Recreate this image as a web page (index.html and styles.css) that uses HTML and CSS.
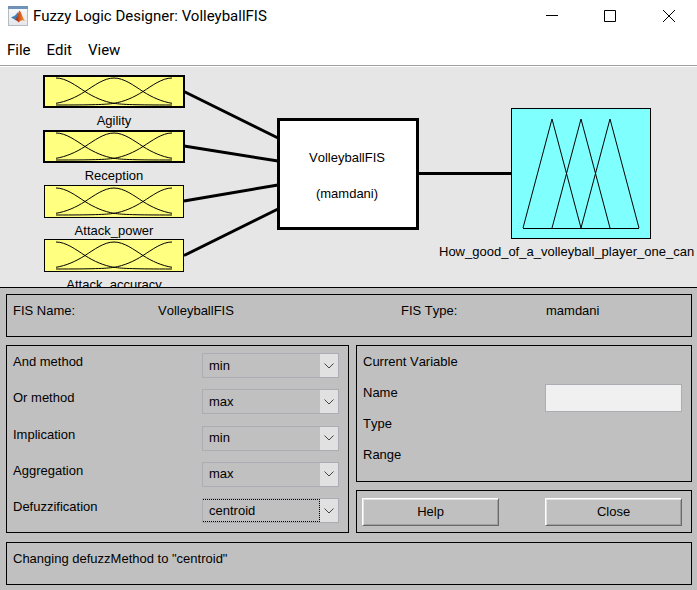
FILE: index.html
```html
<!DOCTYPE html>
<html lang="en">
<head>
<meta charset="utf-8">
<title>Fuzzy Logic Designer: VolleyballFIS</title>
<meta name="viewport" content="width=device-width, initial-scale=1">
<link rel="stylesheet" href="styles.css">
</head>
<body>
<header class="titlebar">
  <svg class="app-icon" viewBox="0 0 20 20" aria-hidden="true">
    <defs>
      <linearGradient id="frame" x1="0" y1="0" x2="0" y2="1">
        <stop offset="0" stop-color="#fafafa"/><stop offset="1" stop-color="#e4e6ea"/>
      </linearGradient>
      <linearGradient id="flame" x1="0" y1="0" x2="1" y2="0">
        <stop offset="0" stop-color="#7a1e10"/><stop offset=".45" stop-color="#d9531e"/><stop offset="1" stop-color="#f0a030"/>
      </linearGradient>
    </defs>
    <rect x=".5" y=".5" width="19" height="19" fill="url(#frame)" stroke="#b4bcc4"/>
    <rect x="0" y="0" width="20" height="3" fill="#6f93b6"/>
    <path d="M3 11.500 7 9.500 10.500 5.500 9.500 11 7.500 14z" fill="#3f7fb5"/>
    <path d="M7 14C9.500 12 10 7 11.500 4.500C13.500 6 14 11 17 15C14.500 13.500 13 14 10.500 16.500C9.500 15 8.500 14 7 14z" fill="url(#flame)"/>
  </svg>
  <h1 class="title">Fuzzy Logic Designer: VolleyballFIS</h1>
  <div class="window-buttons">
    <button type="button" class="window-button" aria-label="Minimize"><svg viewBox="0 0 14 14"><path d="M1 6.500H13"/></svg></button>
    <button type="button" class="window-button" aria-label="Maximize"><svg viewBox="0 0 14 14"><path d="M1.500 1.500H12.500V12.500H1.500z"/></svg></button>
    <button type="button" class="window-button" aria-label="Close window"><svg viewBox="0 0 14 14"><path d="M2 1 14 13M14 1 2 13"/></svg></button>
  </div>
</header>
<nav class="menubar">
  <button type="button" class="menu">File</button>
  <button type="button" class="menu">Edit</button>
  <button type="button" class="menu">View</button>
</nav>

<main>
  <svg class="diagram" viewBox="0 0 697 220" role="img" aria-label="Fuzzy inference system diagram">
    <defs>
      <g id="gaussians">
        <path d="M-58 0C-48 0-38 7.700-29 13.500C-20 19.300-10 23.700 0 25.300C8 26.600 22 27 58 27"/>
        <path d="M-58 25.300C-48 23.700-38 19.300-29 13.500C-20 7.700-10 0 0 0C10 0 20 7.700 29 13.500C38 19.300 48 23.700 58 25.300"/>
        <path d="M58 0C48 0 38 7.700 29 13.500C20 19.300 10 23.700 0 25.300C-8 26.600-22 27-58 27"/>
      </g>
    </defs>
    <g class="wires">
      <path d="M184 24.500 278 71M184 79 278 94M184 134 278 118M184 188.500 278 142M418 106.500H512"/>
    </g>
    <g class="input-box">
      <rect class="thick" x="44" y="9" width="140" height="31"/>
      <rect class="thick" x="44" y="64" width="140" height="31"/>
      <rect x="44.500" y="118.500" width="139" height="32"/>
      <rect x="44.500" y="172.500" width="139" height="32"/>
    </g>
    <g class="curves">
      <use href="#gaussians" x="114" y="11"/>
      <use href="#gaussians" x="114" y="66"/>
      <use href="#gaussians" x="114" y="121"/>
      <use href="#gaussians" x="114" y="175"/>
    </g>
    <rect class="system-box" x="278.500" y="52.500" width="139" height="109"/>
    <rect class="output-box" x="511.500" y="41.500" width="139" height="130"/>
    <path class="curves" d="M523 161.500H639M523 161 552 52 581 161M552 161 581 52 610 161M581 161 610 52 639 161"/>
    <g class="names">
      <text x="114" y="58">Agility</text>
      <text x="114" y="113">Reception</text>
      <text x="114" y="168">Attack_power</text>
      <text x="114" y="222">Attack_accuracy</text>
      <text x="347" y="95">VolleyballFIS</text>
      <text x="347" y="131">(mamdani)</text>
      <text class="from-left" x="439" y="189">How_good_of_a_volleyball_player_one_can</text>
    </g>
  </svg>

  <form class="controls">
    <dl class="panel summary">
      <dt>FIS Name:</dt><dd>VolleyballFIS</dd>
      <dt>FIS Type:</dt><dd>mamdani</dd>
    </dl>

    <section class="panel methods">
      <div class="method">
        <label for="and">And method</label>
        <div class="dropdown"><select id="and"><option>min</option></select><span class="arrow"><svg viewBox="0 0 10 6"><path d="M.5 .5 5 5 9.500 .5"/></svg></span></div>
      </div>
      <div class="method">
        <label for="or">Or method</label>
        <div class="dropdown"><select id="or"><option>max</option></select><span class="arrow"><svg viewBox="0 0 10 6"><path d="M.5 .5 5 5 9.500 .5"/></svg></span></div>
      </div>
      <div class="method">
        <label for="implication">Implication</label>
        <div class="dropdown"><select id="implication"><option>min</option></select><span class="arrow"><svg viewBox="0 0 10 6"><path d="M.5 .5 5 5 9.500 .5"/></svg></span></div>
      </div>
      <div class="method">
        <label for="aggregation">Aggregation</label>
        <div class="dropdown"><select id="aggregation"><option>max</option></select><span class="arrow"><svg viewBox="0 0 10 6"><path d="M.5 .5 5 5 9.500 .5"/></svg></span></div>
      </div>
      <div class="method">
        <label for="defuzz">Defuzzification</label>
        <div class="dropdown active"><select id="defuzz"><option>centroid</option></select><span class="arrow"><svg viewBox="0 0 10 6"><path d="M.5 .5 5 5 9.500 .5"/></svg></span></div>
      </div>
    </section>

    <div class="side">
      <section class="panel variable">
        <h2>Current Variable</h2>
        <div class="field"><label for="name">Name</label><input id="name" type="text"></div>
        <div class="field">Type</div>
        <div class="field">Range</div>
      </section>
      <div class="panel actions">
        <button type="button" class="push">Help</button>
        <button type="button" class="push">Close</button>
      </div>
    </div>

    <p class="panel status" role="status">Changing defuzzMethod to "centroid"</p>
  </form>
</main>
</body>
</html>
```
FILE: styles.css
```css
* {
  box-sizing: border-box;
}

body {
  margin: 0;
  min-height: 100vh;
  background: #c0c0c0;
  color: #000;
  font: 13px/18px "Liberation Sans", Arial, sans-serif;
  font-kerning: none;
}

h1,
h2,
p,
dl,
dd {
  margin: 0;
  font-size: inherit;
  font-weight: normal;
}

button,
input,
select {
  font: inherit;
  color: inherit;
  border-radius: 0;
}

/* Window chrome */

.titlebar {
  display: flex;
  align-items: center;
  height: 32px;
  padding-left: 8px;
  background: #fff;
}

.app-icon {
  width: 20px;
  height: 20px;
  margin-right: 5px;
}

.title,
.menu {
  font: 15px/20px Roboto, "Segoe UI", sans-serif;
}

.window-buttons {
  display: flex;
  margin-left: auto;
}

.window-button {
  display: flex;
  align-items: center;
  justify-content: center;
  width: 58px;
  height: 32px;
  padding: 0;
  border: 0;
  background: none;
}

.window-button svg {
  width: 14px;
  height: 14px;
  fill: none;
  stroke: #000;
}

.menubar {
  display: flex;
  gap: 16px;
  align-items: center;
  height: 34px;
  padding: 3px 7px 0;
  border-bottom: 1px solid #a0a0a0;
  background: #fff;
}

.menu {
  padding: 0;
  border: 0;
  background: none;
}

/* System diagram */

.diagram {
  display: block;
  width: 100%;
  height: 222px;
  border-top: 1px solid #fff;
  border-bottom: 1px solid #000;
  background: #e6e6e6;
}

.wires {
  fill: none;
  stroke: #000;
  stroke-width: 3;
}

.input-box {
  fill: #ffff80;
  stroke: #000;
}

.thick {
  stroke-width: 2;
}

.system-box {
  fill: #fff;
  stroke: #000;
  stroke-width: 3;
}

.output-box {
  fill: #80ffff;
  stroke: #000;
}

.curves {
  fill: none;
  stroke: #000;
}

.names {
  text-anchor: middle;
}

.from-left {
  text-anchor: start;
}

/* Control panels */

.controls {
  display: grid;
  grid-template-columns: 343fr 336fr;
  gap: 8px 7px;
  padding: 6px 5px 6px 6px;
}

.panel {
  border: 1px solid #000;
  padding: 7px 9px 6px 6px;
}

.summary,
.status {
  grid-column: 1 / -1;
  min-height: 43px;
}

.summary {
  display: grid;
  grid-template-columns: 145fr 243fr 145fr 136fr;
}

.status {
  margin-top: 1px;
}

.methods {
  display: flex;
  flex-direction: column;
  justify-content: space-between;
  padding-bottom: 9px;
}

.method,
.field {
  display: flex;
  justify-content: space-between;
  align-items: flex-start;
}

.dropdown {
  position: relative;
  width: 137px;
  height: 25px;
}

.dropdown select {
  width: 100%;
  height: 100%;
  padding: 0 20px 0 6px;
  border: 1px solid #abadb3;
  background: #c0c0c0;
  appearance: none;
}

.arrow {
  position: absolute;
  inset: 1px 1px 1px auto;
  display: flex;
  align-items: center;
  justify-content: center;
  width: 18px;
  background: #e1e1e1;
  pointer-events: none;
}

.arrow svg {
  width: 10px;
  height: 6px;
  fill: none;
  stroke: #444;
}

.active::after {
  content: "";
  position: absolute;
  inset: 1px 19px 1px 1px;
  border: 1px dotted #000;
  border-left: 0;
  pointer-events: none;
}

.side {
  display: flex;
  flex-direction: column;
  gap: 8px;
}

.variable {
  display: grid;
  grid-auto-rows: 31px;
  padding-bottom: 4px;
}

.field input {
  width: 137px;
  height: 28px;
  padding: 0 6px;
  border: 1px solid #abadb3;
  background: #f0f0f0;
}

.actions {
  display: flex;
  justify-content: space-between;
  padding-left: 5px;
}

.push {
  width: 137px;
  height: 28px;
  padding: 0;
  border: 1px solid;
  border-color: #fff #696969 #696969 #fff;
  background: #c0c0c0;
  box-shadow: inset 1px 1px #e3e3e3, inset -1px -1px #a0a0a0;
}
```
